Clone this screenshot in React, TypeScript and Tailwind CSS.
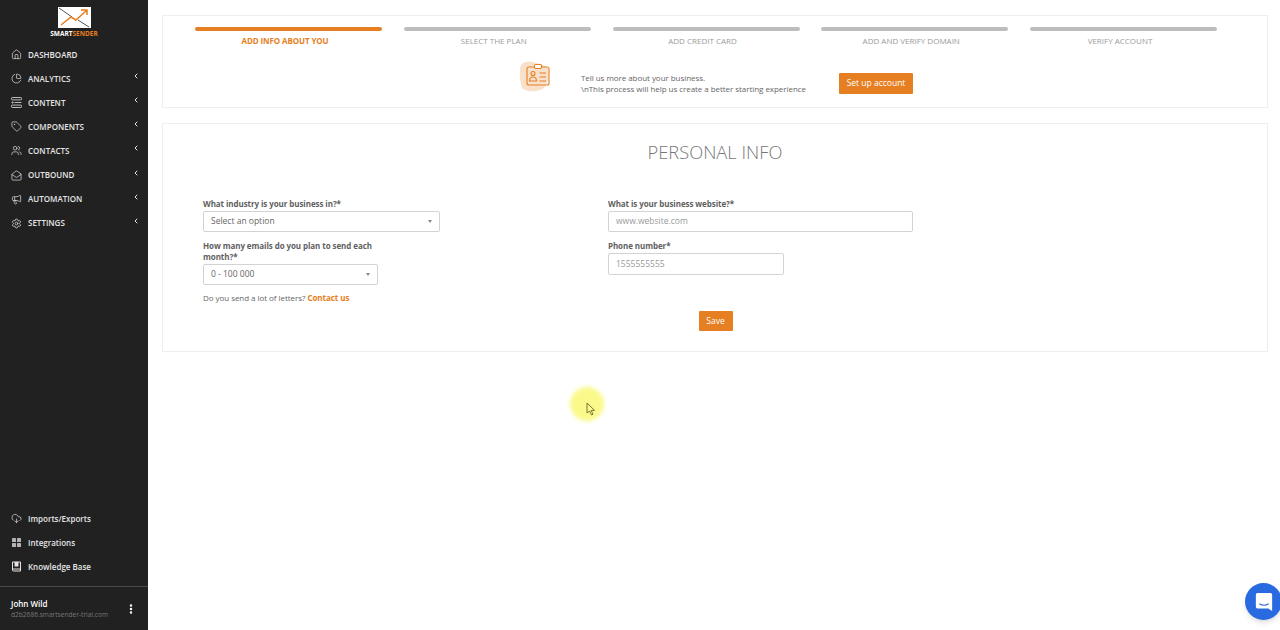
import React from 'react';
import { Home, ChartPie, Tag, Users, MailOpen, Megaphone, Settings, ChevronLeft, CloudDownload, EllipsisVertical } from 'lucide-react';

function ContentIcon({ size = 11 }: { size?: number; strokeWidth?: number; className?: string }) {
  return (
    <svg width={size} height={size} viewBox="0 0 11 11" fill="none" stroke="currentColor" strokeWidth="0.8" className="shrink-0">
      <rect x="0.5" y="0.5" width="10" height="2.4" rx="0.8" />
      <circle cx="1.6" cy="5.5" r="0.7" />
      <path d="M3.5 5.5 H10.5" />
      <rect x="0.5" y="8.1" width="10" height="2.4" rx="0.8" />
    </svg>
  );
}

function IntegrationsIcon({ size = 11 }: { size?: number; strokeWidth?: number; className?: string }) {
  return (
    <svg width={size} height={size} viewBox="0 0 11 11" fill="currentColor" fillOpacity="0.75" className="shrink-0">
      <rect x="1" y="1" width="4" height="4" rx="0.6" />
      <rect x="6" y="1" width="4" height="4" rx="0.6" />
      <rect x="1" y="6" width="4" height="4" rx="0.6" />
      <rect x="6" y="6" width="4" height="4" rx="0.6" />
    </svg>
  );
}

function BookIcon({ size = 11 }: { size?: number; strokeWidth?: number; className?: string }) {
  return (
    <svg width={size} height={size} viewBox="0 0 11 11" className="shrink-0">
      <path d="M1.5 1 H9.5 V10 H2.5 a1 1 0 0 1 -1 -1 Z" fill="none" stroke="currentColor" strokeWidth="1" />
      <rect x="3.5" y="1" width="4" height="4.5" fill="currentColor" />
      <path d="M1.5 8 H9.5" stroke="currentColor" strokeWidth="1" />
    </svg>
  );
}

const mainMenu = [
  { label: 'DASHBOARD', icon: Home, arrow: false },
  { label: 'ANALYTICS', icon: ChartPie, arrow: true },
  { label: 'CONTENT', icon: ContentIcon, arrow: true },
  { label: 'COMPONENTS', icon: Tag, arrow: true },
  { label: 'CONTACTS', icon: Users, arrow: true },
  { label: 'OUTBOUND', icon: MailOpen, arrow: true },
  { label: 'AUTOMATION', icon: Megaphone, arrow: true },
  { label: 'SETTINGS', icon: Settings, arrow: true },
];

const bottomMenu = [
  { label: 'Imports/Exports', icon: CloudDownload },
  { label: 'Integrations', icon: IntegrationsIcon },
  { label: 'Knowledge Base', icon: BookIcon },
];

const steps = ['ADD INFO ABOUT YOU', 'SELECT THE PLAN', 'ADD CREDIT CARD', 'ADD AND VERIFY DOMAIN', 'VERIFY ACCOUNT'];

function Logo() {
  return (
    <div className="flex flex-col items-center h-[42.5px] pt-[7px]">
      <svg width="33" height="21" viewBox="0 0 33 21">
        <rect width="33" height="21" fill="#fff" />
        <path d="M1 1 L14 10 M20 13 L31 20" stroke="#555" strokeWidth="1" />
        <path d="M3 18 L13 10 L18 13 L29 3 M23 3 L29 3 L29 8" stroke="#e67e22" strokeWidth="1.5" fill="none" />
      </svg>
      <div className="text-[6.5px] leading-[8px] font-bold mt-[2px]">
        <span className="text-white">SMART</span>
        <span className="text-[#e67e22]">SENDER</span>
      </div>
    </div>
  );
}

function Sidebar() {
  return (
    <aside className="w-[148px] h-full shrink-0 bg-[#212121] flex flex-col text-[#e4e4e4]">
      <Logo />
      <nav>
        {mainMenu.map((item) => (
          <div key={item.label} className="h-[24.1px] pl-[11px] pr-[8px] flex items-center">
            <item.icon size={11} strokeWidth={1.5} className="shrink-0" />
            <span className="ml-[6px] text-[8px] font-semibold">{item.label}</span>
            {item.arrow && <ChevronLeft size={8} strokeWidth={3} className="ml-auto -mt-[5px]" />}
          </div>
        ))}
      </nav>
      <nav className="mt-auto pb-[7px]">
        {bottomMenu.map((item) => (
          <div key={item.label} className="h-[24.1px] pl-[11px] flex items-center">
            <item.icon size={11} strokeWidth={1.5} className="shrink-0" />
            <span className="ml-[6px] text-[8px] font-semibold">{item.label}</span>
          </div>
        ))}
      </nav>
      <div className="h-[44px] border-t border-[#4a4a4a] pl-[11px] pr-[13px] flex items-center justify-between">
        <div>
          <div className="text-[8px] leading-[12px] font-semibold text-white">John Wild</div>
          <div className="text-[6.6px] leading-[9px] text-[#777]">d2b2686.smartsender-trial.com</div>
        </div>
        <EllipsisVertical size={12} strokeWidth={3} className="text-white -mr-[2px]" />
      </div>
    </aside>
  );
}

function Stepper() {
  return (
    <div className="flex gap-[21.75px] pl-[32px] pt-[11px]">
      {steps.map((step, i) => (
        <div key={step} className="w-[187px] text-center">
          <div className={i === 0 ? 'h-[4px] rounded-full bg-[#e67e22]' : 'h-[4px] rounded-full bg-[#bdbdbd]'} />
          <div className={i === 0 ? 'mt-[4px] pr-[7px] text-[8px] leading-[12px] font-bold tracking-[-0.1px] text-[#e67e22]' : 'mt-[4px] pr-[7px] text-[8px] leading-[12px] text-[#9a9a9a]'}>
            {step}
          </div>
        </div>
      ))}
    </div>
  );
}

function Field({ label, children, className }: { label: string; children: React.ReactNode; className?: string }) {
  return (
    <div className={className}>
      <div className="text-[8px] leading-[11px] font-bold tracking-[-0.08px] text-[#5f5f5f] mb-[2px]">{label}</div>
      {children}
    </div>
  );
}

function FakeSelect({ value, width }: { value: string; width: string }) {
  return (
    <div className={`${width} h-[21px] bg-white border border-[#d3d3d3] rounded-[2px] pl-[7px] pr-[7px] flex items-center justify-between text-[8.5px] text-[#666]`}>
      <span>{value}</span>
      <span className="w-0 h-0 border-l-[2.5px] border-r-[2.5px] border-t-[3px] border-l-transparent border-r-transparent border-t-[#888]" />
    </div>
  );
}

function FakeInput({ placeholder, width, height }: { placeholder: string; width: string; height: string }) {
  return (
    <div className={`${width} ${height} bg-white border border-[#d3d3d3] rounded-[2px] pl-[7px] flex items-center text-[8.5px] text-[#999]`}>
      {placeholder}
    </div>
  );
}

export default function App() {
  return (
    <div className="relative w-[1280px] h-[630px] overflow-hidden flex bg-white font-['Open_Sans',sans-serif]">
      <Sidebar />
      <main className="flex-1 pl-[14px] pr-[12px] pt-[15px]">
        {/* Шаги */}
        <section className="h-[93px] border border-[#efefef]">
          <Stepper />
          <div className="flex pl-[356px] pt-[14px]">
            <svg width="31" height="31" viewBox="0 0 31 31" className="shrink-0">
              <path d="M4 2 Q10 -1 17 2 Q25 3 29 8 Q31 15 28 22 Q26 29 17 30 Q8 31 3 27 Q0 18 1 10 Q1 4 4 2 Z" fill="#f9e0cb" />
              <g fill="none" stroke="#e67e22" strokeWidth="1.1" strokeLinejoin="round">
                <rect x="8" y="6" width="22" height="18" rx="2" />
                <rect x="15.5" y="3.5" width="7" height="4" rx="1.2" fill="#fff" />
                <circle cx="14" cy="12.5" r="2" />
                <path d="M10.5 20 Q10.5 16 14 16 Q17.5 16 17.5 20 Z" />
                <path d="M20.5 12 H27 M20.5 16 H27 M20.5 20 H27" />
              </g>
            </svg>
            <div className="ml-[31px] mt-[11px] text-[8px] leading-[11px] tracking-[-0.05px] text-[#666]">
              <div>Tell us more about your business.</div>
              <div>\nThis process will help us create a better starting experience</div>
            </div>
            <button className="ml-[33px] mt-[12px] w-[74px] h-[21px] bg-[#e67e22] rounded-[1px] text-white text-[8.5px]">Set up account</button>
          </div>
        </section>

        {/* Форма */}
        <section className="mt-[15px] h-[229px] border border-[#efefef]">
          <h1 className="pt-[17px] text-center text-[18.3px] leading-[22px] font-light text-[#777]">PERSONAL INFO</h1>
          <div className="flex mt-[35px] pl-[40px]">
            <div className="w-[405px]">
              <Field label="What industry is your business in?*" className="mb-[8px]">
                <FakeSelect value="Select an option" width="w-[237px]" />
              </Field>
              <Field label="How many emails do you plan to send each month?*" className="w-[190px]">
                <FakeSelect value="0 - 100 000" width="w-[175px]" />
              </Field>
              <div className="mt-[7px] text-[8px] leading-[11px] tracking-[-0.05px] text-[#666]">
                Do you send a lot of letters? <span className="font-bold text-[#e67e22]">Contact us</span>
              </div>
            </div>
            <div>
              <Field label="What is your business website?*" className="mb-[8px]">
                <FakeInput placeholder="www.website.com" width="w-[305px]" height="h-[21px]" />
              </Field>
              <Field label="Phone number*">
                <FakeInput placeholder="1555555555" width="w-[176px]" height="h-[22px]" />
              </Field>
            </div>
          </div>
          <div className="flex justify-center mt-[8px]">
            <button className="w-[34px] h-[20px] ml-[1px] bg-[#e67e22] rounded-[1px] text-white text-[8.5px]">Save</button>
          </div>
        </section>
      </main>

      {/* Подсветка курсора */}
      <div className="absolute left-[570px] top-[387px] w-[34px] h-[34px] rounded-full bg-[#fbf98a] blur-[2px]" />
      <svg className="absolute left-[586px] top-[402px]" width="10" height="15" viewBox="0 0 10 15">
        <path d="M1 1 L1 11 L3.5 9 L5.5 13 L7 12.2 L5.2 8.5 L8.5 8.3 Z" fill="#fbf98a" stroke="#77773a" strokeWidth="1" />
      </svg>

      {/* Чат */}
      <div className="absolute left-[1245px] top-[583px] w-[37px] h-[37px] rounded-full bg-[#2a6ae0] shadow-md flex items-center justify-center">
        <svg width="18" height="20" viewBox="0 0 21 23">
          <path d="M3 1 H18 a2 2 0 0 1 2 2 V22 L15.5 19 H3 a2 2 0 0 1 -2 -2 V3 a2 2 0 0 1 2 -2 Z" fill="#fff" />
          <path d="M5 13.5 Q10.5 17 16 13.5" stroke="#2a6ae0" strokeWidth="1.2" fill="none" />
        </svg>
      </div>
    </div>
  );
}
